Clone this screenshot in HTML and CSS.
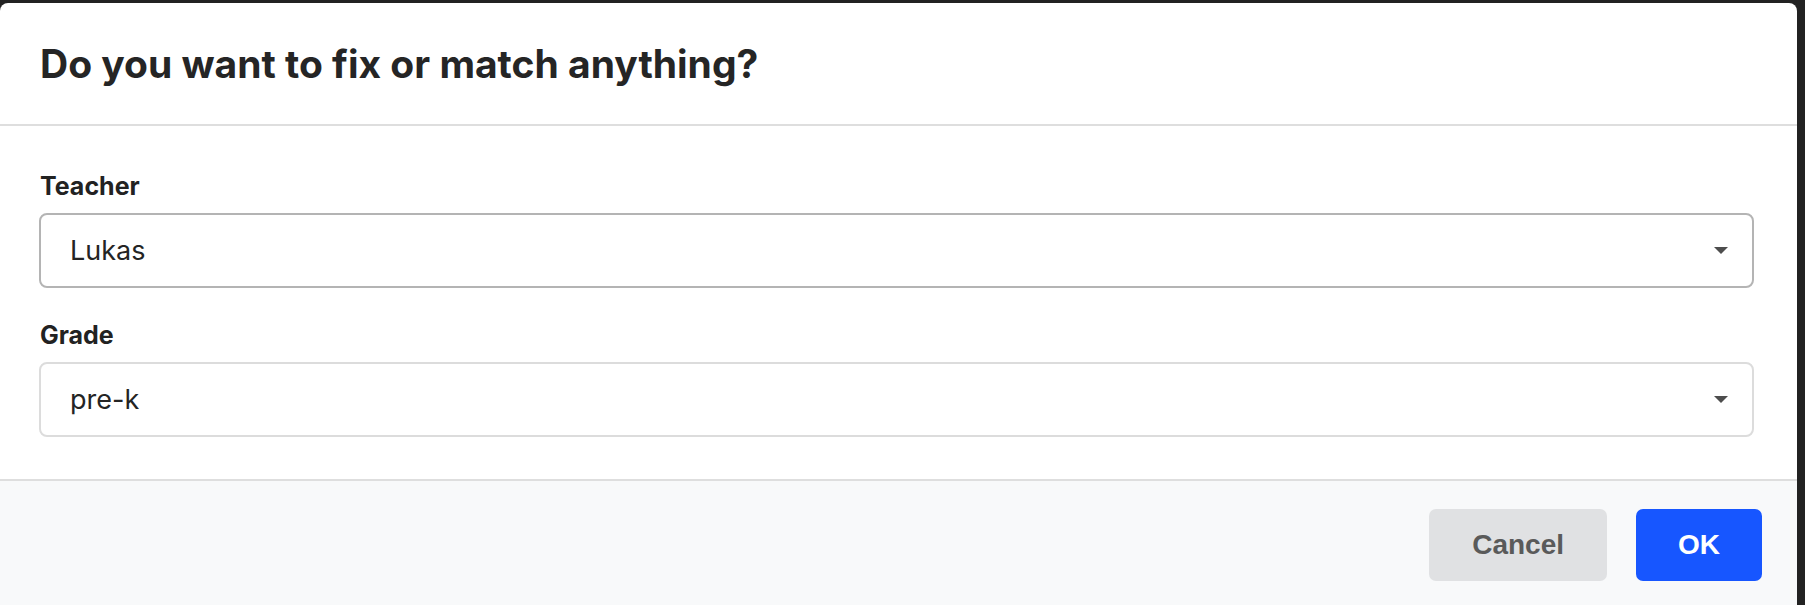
FILE: index.html
```html
<!DOCTYPE html>
<html lang="en">
<head>
<meta charset="utf-8">
<title>Fix or match</title>
<link rel="stylesheet" href="styles.css">
</head>
<body>
  <div class="page-strip"><span class="page-title">Edit students</span></div>
  <div class="dialog">
    <div class="dialog-header">
      <h2 class="dialog-title">Do you want to fix or match anything?</h2>
    </div>
    <div class="dialog-body">
      <div class="field">
        <label class="field-label">Teacher</label>
        <div class="select select-active">
          <span class="select-value">Lukas</span>
          <svg class="select-arrow" width="14" height="7" viewBox="0 0 14 7"><path d="M0 0H14L7 7Z" fill="#4d4d4d"/></svg>
        </div>
      </div>
      <div class="field">
        <label class="field-label">Grade</label>
        <div class="select">
          <span class="select-value">pre-k</span>
          <svg class="select-arrow" width="14" height="7" viewBox="0 0 14 7"><path d="M0 0H14L7 7Z" fill="#4d4d4d"/></svg>
        </div>
      </div>
    </div>
    <div class="dialog-footer">
      <button class="btn btn-cancel">Cancel</button>
      <button class="btn btn-ok">OK</button>
    </div>
  </div>
</body>
</html>
```
FILE: styles.css
```css
html, body {
  margin: 0;
  padding: 0;
}
body {
  background: #222222;
  height: 605px;
  overflow: hidden;
  font-family: Inter, "Noto Sans", sans-serif;
  color: #242424;
}
.page-strip {
  height: 3px;
  overflow: hidden;
  padding-left: 22px;
}
.page-title {
  display: block;
  margin-top: -21px;
  font-size: 24px;
  font-weight: 700;
  line-height: 24px;
  color: #4a4a4a;
}
.dialog {
  width: 1797px;
  background: #ffffff;
  border-radius: 8px 8px 0 0;
}
.dialog-header {
  height: 123px;
  box-sizing: border-box;
  padding: 0 40px;
  display: flex;
  align-items: center;
  border-bottom: 2px solid #dedede;
}
.dialog-title {
  margin: 0;
  font-size: 39px;
  font-weight: 700;
  color: #252525;
}
.dialog-body {
  padding: 45px 43px 42px 39px;
  display: flex;
  flex-direction: column;
  gap: 32px;
}
.field {
  display: flex;
  flex-direction: column;
}
.field-label {
  font-size: 25px;
  line-height: 30px;
  font-weight: 700;
  color: #222222;
  margin: 0 0 12px 1px;
}
.select {
  height: 75px;
  box-sizing: border-box;
  border: 2px solid #dcdcdc;
  border-radius: 8px;
  display: flex;
  align-items: center;
  justify-content: space-between;
  padding: 0 24px 0 29px;
}
.select-active {
  border-color: #b4b4b4;
}
.select-value {
  font-size: 27px;
  color: #242424;
}
.select-arrow {
  display: block;
}
.dialog-footer {
  background: #f8f9fa;
  border-top: 2px solid #dedede;
  padding: 28px 35px 28px;
  display: flex;
  justify-content: flex-end;
  gap: 29px;
}
.btn {
  height: 72px;
  border: none;
  border-radius: 7px;
  font-family: "Liberation Sans", Arial, sans-serif;
  font-size: 28px;
  font-weight: 700;
  cursor: pointer;
}
.btn-cancel {
  background: #e0e1e3;
  color: #5a5a5a;
  padding: 0 43px;
}
.btn-ok {
  background: #1756ff;
  color: #ffffff;
  padding: 0 42px;
}
```
